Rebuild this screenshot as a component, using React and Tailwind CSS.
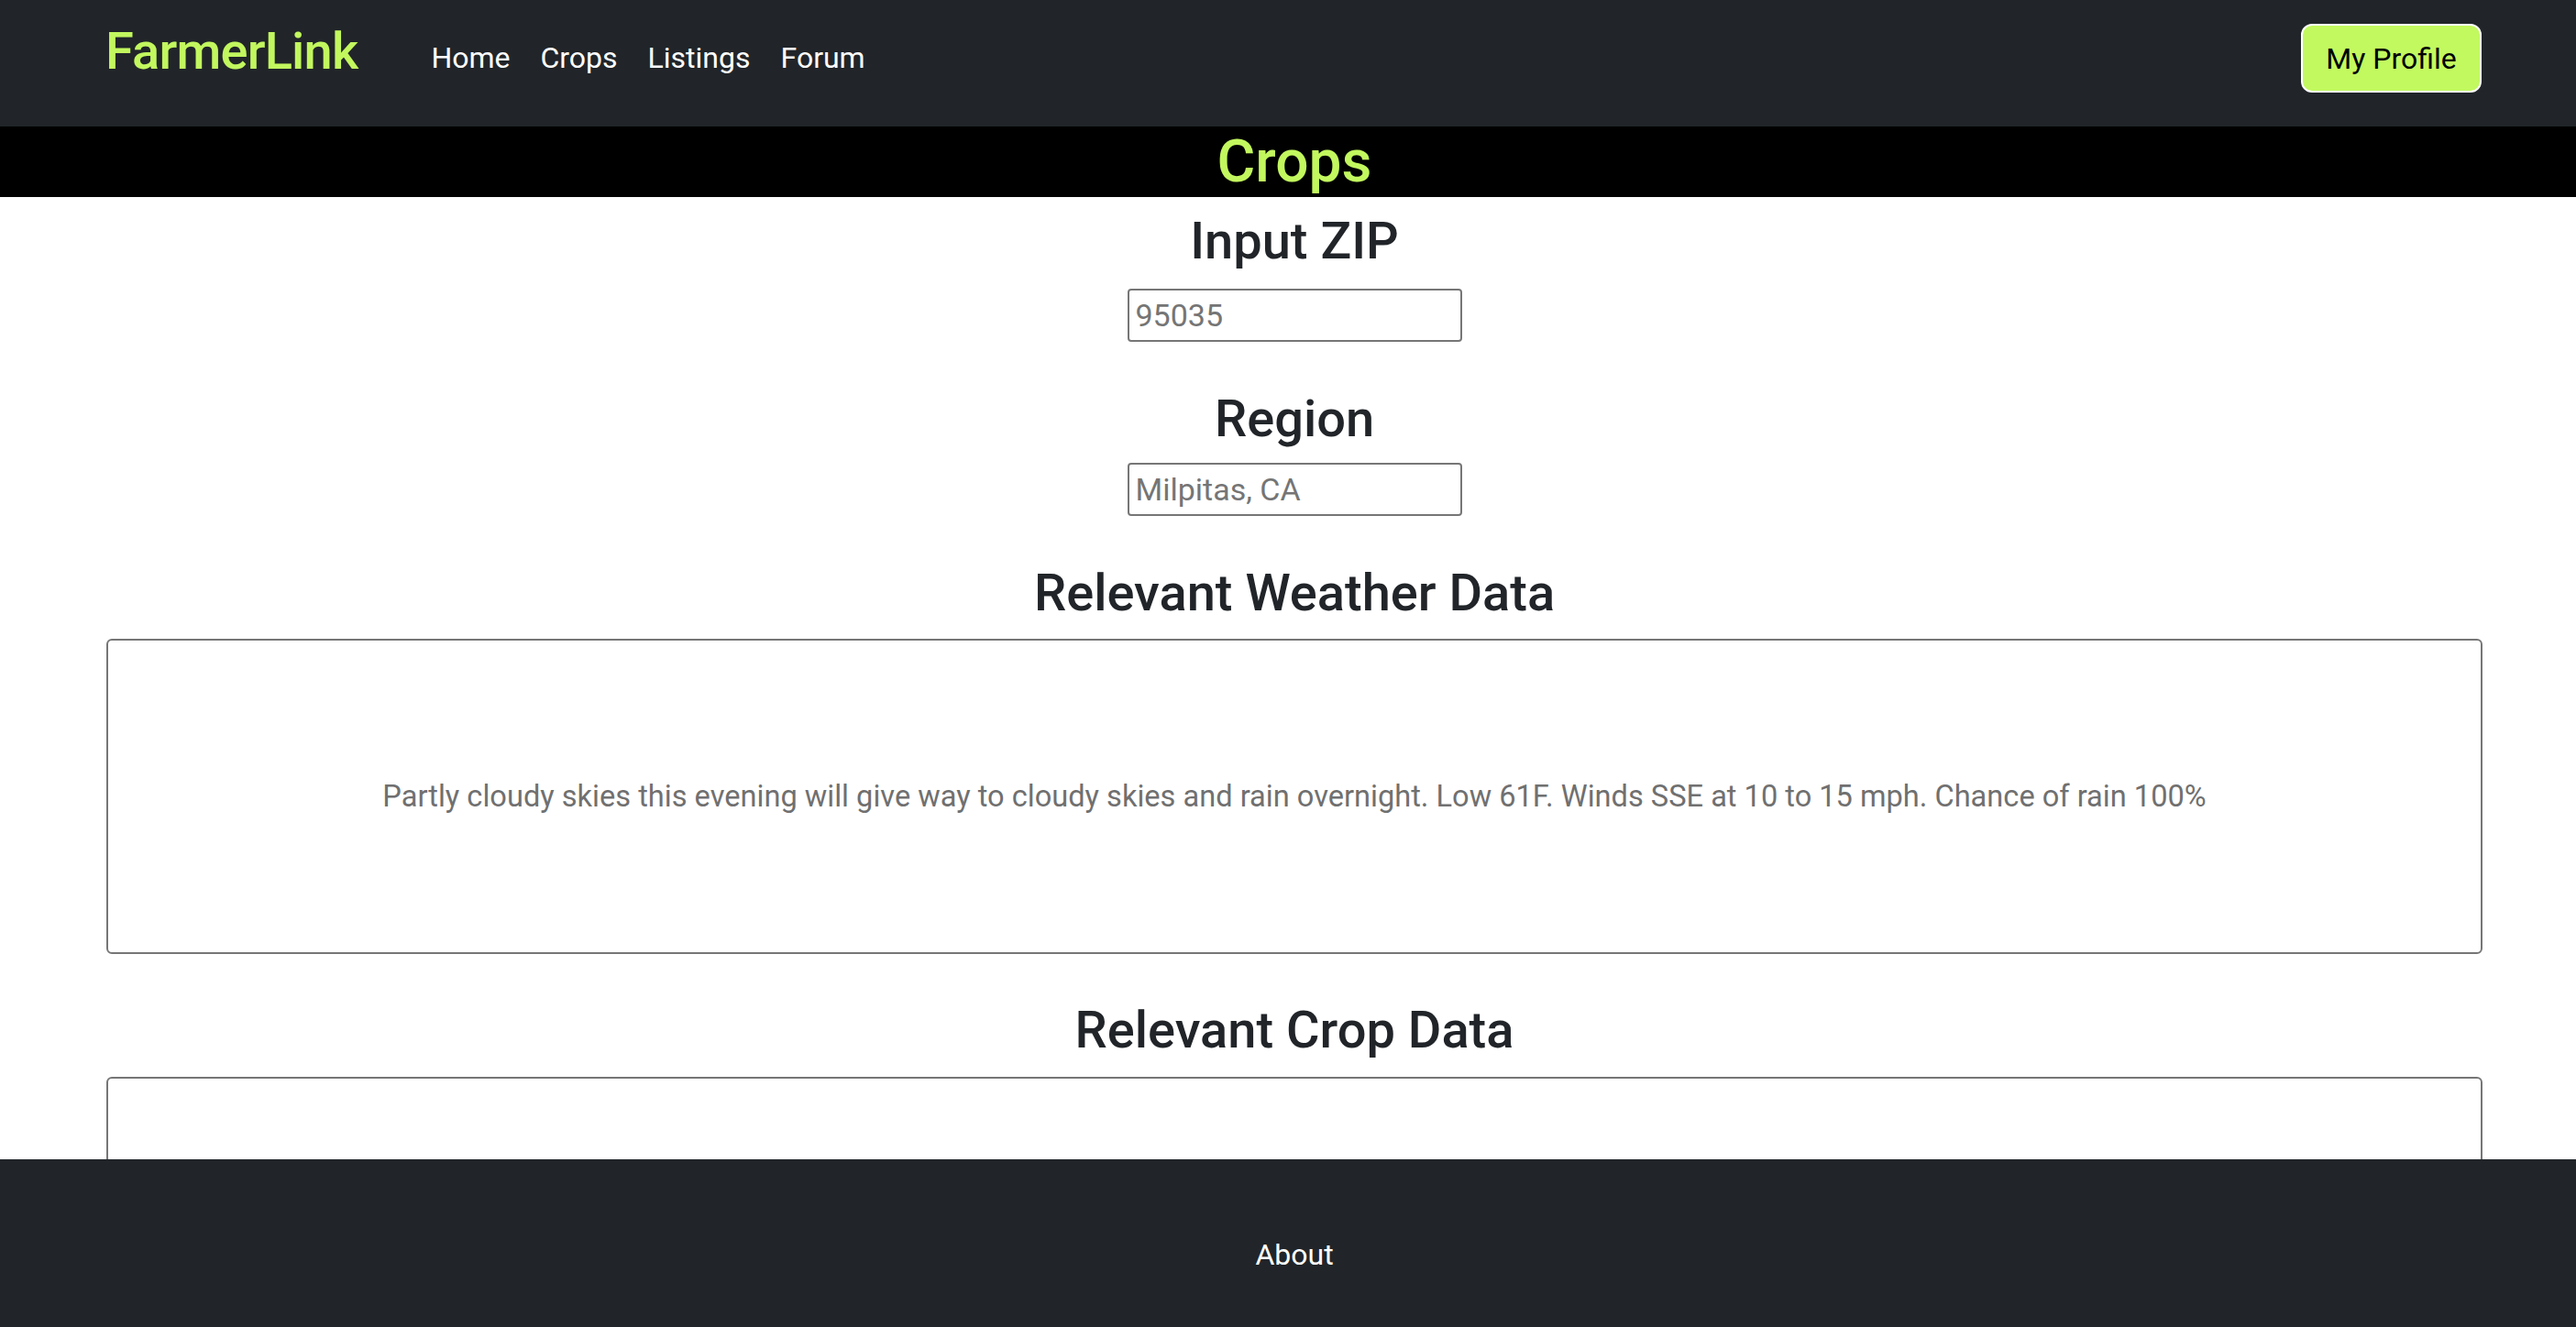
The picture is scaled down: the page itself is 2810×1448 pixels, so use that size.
export default function App() {
  const font = { fontFamily: 'Roboto, "Liberation Sans", Arial, sans-serif' };
  return (
    <div className="h-[1448px] w-full flex flex-col overflow-hidden bg-white" style={font}>
      {/* Header */}
      <header className="h-[138px] shrink-0 bg-[#212529] flex items-start pl-[115px] pr-[103px]">
        <a className="mt-[23px] text-[56px] leading-[67px] font-medium text-[#c2f75e] tracking-[-0.8px]">FarmerLink</a>
        <nav className="ml-[80px] mt-[44px] flex gap-[33px] text-[32px] leading-[38px] text-white">
          <a>Home</a>
          <a>Crops</a>
          <a>Listings</a>
          <a>Forum</a>
        </nav>
        <button className="ml-auto mt-[26px] h-[75px] w-[197px] rounded-[12px] border-2 border-white bg-[#c2f95f] text-[32px] text-black">
          My Profile
        </button>
      </header>

      {/* Title band */}
      <div className="h-[77px] shrink-0 bg-black pl-[14px] text-center text-[64px] leading-[77px] font-medium text-[#c2f75e]">
        Crops
      </div>

      {/* Main */}
      <main className="flex-1 overflow-hidden pl-[116px] pr-[102px] flex flex-col items-center text-[#212529]">
        <h3 className="shrink-0 mt-[15px] text-[56px] leading-[67px] font-medium">Input ZIP</h3>
        <input
          className="shrink-0 mt-[18px] h-[58px] w-[365px] rounded-[4px] border-2 border-[#767676] px-[7px] text-[34px] placeholder:text-[#757575] outline-none"
          placeholder="95035"
        />
        <h3 className="shrink-0 mt-[51px] text-[56px] leading-[67px] font-medium">Region</h3>
        <input
          className="shrink-0 mt-[14px] h-[58px] w-[365px] rounded-[4px] border-2 border-[#767676] px-[7px] text-[34px] placeholder:text-[#757575] outline-none"
          placeholder="Milpitas, CA"
        />
        <h3 className="shrink-0 mt-[51px] text-[56px] leading-[67px] font-medium">Relevant Weather Data</h3>
        <div className="mt-[16px] h-[344px] w-full shrink-0 rounded-[6px] border-2 border-[#767676] flex items-center justify-center text-[32.6px] text-[#707070]">
          Partly cloudy skies this evening will give way to cloudy skies and rain overnight. Low 61F. Winds SSE at 10 to 15 mph. Chance of rain 100%
        </div>
        <h3 className="shrink-0 mt-[50px] text-[56px] leading-[67px] font-medium">Relevant Crop Data</h3>
        <div className="mt-[17px] h-[344px] w-full shrink-0 rounded-[6px] border-2 border-[#767676]"></div>
      </main>

      {/* Footer */}
      <footer className="h-[183px] shrink-0 bg-[#212529] pl-[14px] pt-[85px] text-center text-[32px] leading-[38px] text-white">
        <a>About</a>
      </footer>
    </div>
  );
}
